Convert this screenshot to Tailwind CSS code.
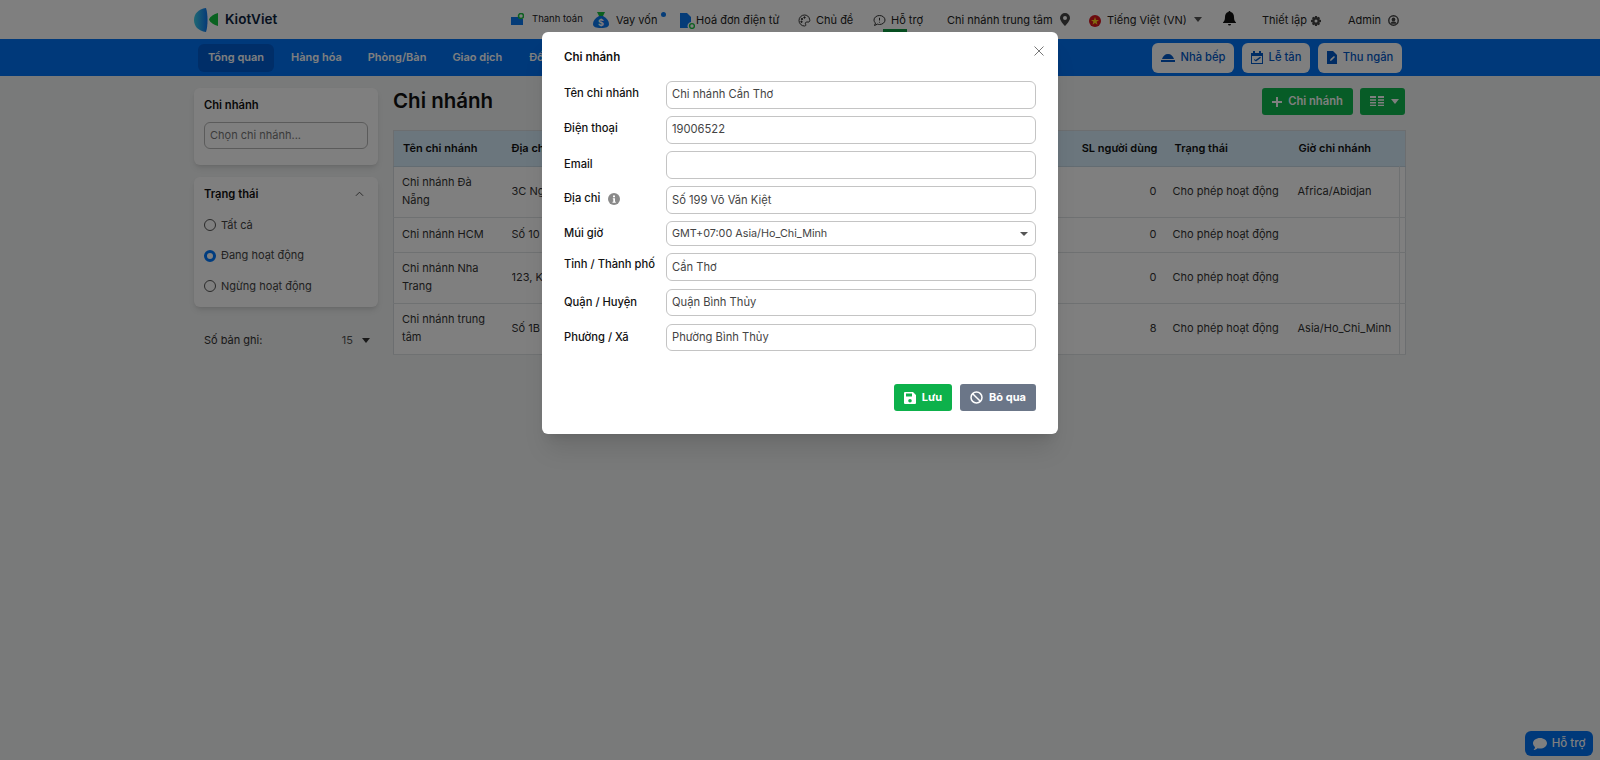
<!DOCTYPE html>
<html lang="vi">
<head>
<meta charset="utf-8">
<title>Chi nhánh</title>
<script src="https://cdn.jsdelivr.net/npm/@tailwindcss/browser@4"></script>
</head>
<body class="relative h-[760px] w-[1600px] overflow-hidden bg-[#f2f4f4] font-['Inter','Noto_Sans',sans-serif] text-[11px] text-[#1f2937]">

<header class="flex h-[39px] items-center bg-white pl-[194px] pt-[2px] text-[11px] text-[#222]">
  <svg class="mb-[2px] w-[25px] h-[24px]" viewBox="0 0 25 24"><defs><linearGradient id="lg" x1="0" x2="1"><stop offset="0" stop-color="#3fd0e8"/><stop offset="1" stop-color="#0a74f0"/></linearGradient></defs><path d="M12 0C4 1 0 6 0 12s4 11 12 12c1-3 1.500-7 1.500-12S13 3 12 0z" fill="url(#lg)"/><path d="M24 5v13c-4-1-8-3.500-9-6.500 1-3 5-5.500 9-6.500z" fill="#12c440"/></svg>
  <span class="mb-[2px] ml-[6px] w-[52px] text-[13.5px] font-semibold text-[#0c2340]">KiotViet</span>
  <svg class="mb-[2px] ml-[234px] w-[13px] h-[13px]" viewBox="0 0 13 13"><path d="M0 4h8v2h4v6H0z" fill="#0a78f0"/><circle cx="10" cy="3" r="2.5" fill="none" stroke="#18c040" stroke-width="1.5"/></svg>
  <span class="mb-[2px] ml-[8px] w-[49px] text-[9.5px] whitespace-nowrap">Thanh toán</span>
  <svg class="mb-[2px] ml-[11px] w-[18px] h-[18px]" viewBox="0 0 18 18"><path d="M5 1h8l-2 4H7z" fill="#18c040"/><path d="M7 5h4c4 2 6 5 6 8 0 3-3 4-8 4s-8-1-8-4c0-3 2-6 6-8z" fill="#0a78f0"/><text x="9" y="15" font-size="9" font-weight="700" text-anchor="middle" fill="#fff">$</text></svg>
  <span class="ml-[6px] w-[42px] whitespace-nowrap">Vay vốn</span>
  <span class="mb-[13px] ml-[3px] h-[5px] w-[5px] rounded-full bg-[#0a78f0]"></span>
  <svg class="ml-[14px] w-[15px] h-[16px]" viewBox="0 0 15 16"><path d="M0 0h7l4 4v5a4 4 0 0 0-3 6H0z" fill="#0a78f0"/><circle cx="12" cy="13" r="2.4" fill="none" stroke="#18c040" stroke-width="1.4"/></svg>
  <span class="ml-[1px] w-[84px] whitespace-nowrap">Hoá đơn điện tử</span>
  <svg class="ml-[18px] w-[13px] h-[13px]" viewBox="0 0 13 13" fill="none" stroke="#333" stroke-width="1"><path d="M6.500 1a5.500 5.500 0 1 0 0 11c1.500 0 1.500-1 1-2s0-2 1.500-2h2c1-.5 1-2 .5-3C11 2.500 9 1 6.500 1z"/><circle cx="4" cy="5" r=".7" fill="#333"/><circle cx="6.500" cy="3.500" r=".7" fill="#333"/><circle cx="3.500" cy="7.800" r=".7" fill="#333"/></svg>
  <span class="ml-[5px] w-[37px] whitespace-nowrap">Chủ đề</span>
  <svg class="ml-[20px] w-[13px] h-[13px]" viewBox="0 0 13 13" fill="none" stroke="#333" stroke-width="1"><path d="M6.500 1.500c3 0 5.500 2 5.500 4.500s-2.500 4.500-5.500 4.500c-1 0-1.500-.2-2-.4L1.500 11.500l1-2.500C1.500 8.200 1 7.100 1 6c0-2.500 2.500-4.500 5.500-4.500z"/><path d="M6.500 3.800v2.700M6.500 7.800v.8"/></svg>
  <span class="relative ml-[5px] w-[33px] whitespace-nowrap">Hỗ trợ<span class="absolute left-[-8px] top-[17px] h-[4px] w-[24px] bg-[#0c9a40]"></span></span>
  <span class="ml-[23px] w-[105px] whitespace-nowrap">Chi nhánh trung tâm</span>
  <svg class="mb-[3px] ml-[8px] w-[10px] h-[13px]" viewBox="0 0 10 13"><path fill-rule="evenodd" d="M5 0a5 5 0 0 1 5 5c0 2.500-3 6-5 8-2-2-5-5.500-5-8a5 5 0 0 1 5-5zm0 3a2 2 0 1 0 0 4 2 2 0 0 0 0-4z" fill="#444"/></svg>
  <svg class="ml-[19px] w-[12px] h-[12px]" viewBox="0 0 12 12"><circle cx="6" cy="6" r="6" fill="#d8141c"/><path d="M6 2l1 2.900h3L7.600 6.700l.9 3L6 8 3.500 9.700l.9-3L2 4.900h3z" fill="#ffd21e"/></svg>
  <span class="ml-[6px] w-[79px] whitespace-nowrap">Tiếng Việt (VN)</span>
  <span class="mb-[2px] ml-[8px] h-0 w-0 border-x-[4px] border-t-[5px] border-x-transparent border-t-[#555]"></span>
  <svg class="mb-[5px] ml-[21px] w-[13px] h-[15px]" viewBox="0 0 13 15"><path d="M6.500 0c.7 0 1 .5 1 1.100C9.800 1.500 11 3.500 11 6c0 3 .8 4.300 2 5.500V12H0v-.5C1.200 10.300 2 9 2 6c0-2.500 1.200-4.500 3.500-4.900C5.500.5 5.800 0 6.500 0zM5 13h3a1.500 1.500 0 0 1-3 0z" fill="#111"/></svg>
  <span class="ml-[26px] w-[44px] whitespace-nowrap">Thiết lập</span>
  <svg class="ml-[5px] w-[10px] h-[10px]" viewBox="0 0 10 10"><path fill-rule="evenodd" d="M4 0h2l.3 1.400 1.300-.7 1.400 1.400-.7 1.300L10 4v2l-1.700.6.700 1.300L7.600 9.300l-1.300-.7L6 10H4l-.3-1.400-1.300.7L1 7.900l.7-1.300L0 6V4l1.700-.6L1 2.100 2.400.7l1.300.7zM5 3.500a1.500 1.500 0 1 0 0 3 1.500 1.500 0 0 0 0-3z" fill="#444"/></svg>
  <span class="mb-[1px] ml-[27px] w-[33px] whitespace-nowrap">Admin</span>
  <svg class="mb-[1px] ml-[7px] w-[11px] h-[11px]" viewBox="0 0 10 10"><circle cx="5" cy="5" r="4.300" fill="none" stroke="#444" stroke-width="1.300"/><circle cx="5" cy="4" r="1.700" fill="#444"/><path d="M2 8c.5-1.500 1.700-2 3-2s2.500.5 3 2z" fill="#444"/></svg>
</header>

<nav class="flex h-[37px] items-center bg-[#0072f4] pl-[198px] pr-[198px] text-[11px] font-semibold text-white">
  <span class="flex h-[28px] w-[76px] items-center justify-center rounded-md bg-[#005cd0]">Tổng quan</span>
  <span class="ml-[17px]">Hàng hóa</span>
  <span class="ml-[26px]">Phòng/Bàn</span>
  <span class="ml-[26px]">Giao dịch</span>
  <span class="ml-[27px] w-[13px] overflow-hidden whitespace-nowrap">Đối tác</span>
  <div class="ml-auto flex gap-[8px] text-[11.200px] font-medium text-[#0058c8]">
    <span class="flex h-[30px] w-[82px] items-center justify-center gap-[6px] rounded-md bg-white"><svg class="w-[14px] h-[9px]" viewBox="0 0 14 9"><path d="M1 6c1-3 3-5 6-5s5 2 6 5zM0 7h14v2H0z" fill="#0058c8"/></svg>Nhà bếp</span>
    <span class="flex h-[30px] w-[68px] items-center justify-center gap-[6px] rounded-md bg-white"><svg class="w-[12px] h-[13px]" viewBox="0 0 12 13"><path fill-rule="evenodd" d="M2 0h2v2h4V0h2v2h2v11H0V2h2zm-1 5v7h10V5zm2.500 3l1 1L9 5.800l1 1L5 10.500 3 9z" fill="#0058c8"/></svg>Lễ tân</span>
    <span class="flex h-[30px] w-[84px] items-center justify-center gap-[6px] rounded-md bg-white"><svg class="w-[10px] h-[13px]" viewBox="0 0 10 13"><path fill-rule="evenodd" d="M0 0h6l4 4v9H0zm3 10l.5-2L7 5l1 1-3.500 3.500z" fill="#0058c8"/></svg>Thu ngân</span>
  </div>
</nav>

<main class="flex items-start pl-[194px] pt-[12px]">
  <aside class="w-[184px]">
    <section class="h-[77px] rounded-md bg-white px-[10px] pt-[9px] shadow-md">
      <div class="text-[11.200px] font-semibold text-[#111]">Chi nhánh</div>
      <div class="mt-[8px] flex h-[27px] items-center rounded-md border border-[#b6b6b6] px-[5px] text-[#777]">Chọn chi nhánh...</div>
    </section>
    <section class="mt-[12px] h-[130px] rounded-md bg-white px-[10px] pt-[9px] shadow-md">
      <div class="flex items-center justify-between text-[11.200px] font-semibold text-[#111]">Trạng thái
        <svg class="mr-[4px] w-[9px] h-[6px]" viewBox="0 0 10 6" fill="none" stroke="#444" stroke-width="1"><path d="M1 5l4-4 4 4"/></svg></div>
      <div class="mt-[14px] flex items-center gap-[5px] text-[#444]"><span class="h-[12px] w-[12px] rounded-full border border-[#555]"></span>Tất cả</div>
      <div class="mt-[14px] flex items-center gap-[5px] text-[#444]"><span class="h-[12px] w-[12px] rounded-full border-[3.500px] border-[#0078ff] bg-white"></span>Đang hoạt động</div>
      <div class="mt-[14px] flex items-center gap-[5px] text-[#444]"><span class="h-[12px] w-[12px] rounded-full border border-[#555]"></span>Ngừng hoạt động</div>
    </section>
    <div class="mt-[25px] flex items-center pl-[10px] pr-[8px] text-[#333]">Số bản ghi:
      <span class="ml-auto text-[#555]">15</span>
      <span class="ml-[9px] h-0 w-0 border-x-[4px] border-t-[5px] border-x-transparent border-t-[#333]"></span>
    </div>
  </aside>

  <div class="ml-[15px] w-[1013px]">
    <div class="flex h-[29px] items-start justify-between pr-[1px]">
      <h1 class="text-[20.500px] font-semibold leading-[26px] text-[#111]">Chi nhánh</h1>
      <div class="flex gap-[7px] text-white">
        <span class="flex h-[27px] w-[91px] items-center justify-center gap-[6px] rounded-[3px] bg-[#0fb84e] text-[11.200px] font-semibold"><svg class="w-[10px] h-[10px]" viewBox="0 0 10 10"><path d="M4 0h2v4h4v2H6v4H4V6H0V4h4z" fill="#fff"/></svg>Chi nhánh</span>
        <span class="flex h-[27px] w-[45px] items-center justify-center gap-[7px] rounded-[3px] bg-[#0fb84e] pl-[3px]"><svg class="w-[14px] h-[12px]" viewBox="0 0 14 12" fill="#fff"><path d="M0 0h6v2H0zM8 0h6v2H8zM0 3.300h6v1.400H0zM8 3.300h6v1.400H8zM0 6h6v1.400H0zM8 6h6v1.400H8zM0 8.700h6v1.400H0zM8 8.700h6v1.400H8z"/></svg><span class="h-0 w-0 border-x-[4px] border-t-[5px] border-x-transparent border-t-white"></span></span>
      </div>
    </div>
    <table class="mt-[13px] w-full table-fixed border-collapse border border-[#d8dde0] bg-white text-[11px] text-[#333]">
      <colgroup><col class="w-[108px]"><col class="w-[543px]"><col class="w-[116px]"><col class="w-[133px]"><col><col class="w-[6px]"></colgroup>
      <thead class="bg-[#d6ecfa] font-semibold text-[#111]">
        <tr class="h-[36px] border-b border-[#c6d8e4]">
          <th class="pl-[9px] text-left font-semibold">Tên chi nhánh</th>
          <th class="pl-[10px] text-left font-semibold">Địa chỉ</th>
          <th class="pr-[3px] text-right font-semibold">SL người dùng</th>
          <th class="pl-[14px] text-left font-semibold">Trạng thái</th>
          <th colspan="2" class="pl-[5px] text-left font-semibold">Giờ chi nhánh</th>
        </tr>
      </thead>
      <tbody class="leading-[18px] [&_td]:pb-[2px]">
        <tr class="h-[51px] border-b border-[#dfe3e5]">
          <td class="pl-[8px] pr-[12px]">Chi nhánh Đà Nẵng</td><td class="pl-[10px]"><span class="block w-[30px] overflow-hidden whitespace-nowrap">3C Ngô</span></td><td class="pr-[4px] text-right">0</td><td class="pl-[12px]">Cho phép hoạt động</td><td class="border-r border-[#dfe3e5] pl-[4px]">Africa/Abidjan</td><td></td>
        </tr>
        <tr class="h-[34.500px] border-b border-[#dfe3e5]">
          <td class="pl-[8px] pr-[12px]">Chi nhánh HCM</td><td class="pl-[10px]"><span class="block w-[30px] overflow-hidden whitespace-nowrap">Số 10</span></td><td class="pr-[4px] text-right">0</td><td class="pl-[12px]">Cho phép hoạt động</td><td class="border-r border-[#dfe3e5]"></td><td></td>
        </tr>
        <tr class="h-[51px] border-b border-[#dfe3e5]">
          <td class="pl-[8px] pr-[12px]">Chi nhánh Nha Trang</td><td class="pl-[10px]"><span class="block w-[30px] overflow-hidden whitespace-nowrap">123, K</span></td><td class="pr-[4px] text-right">0</td><td class="pl-[12px]">Cho phép hoạt động</td><td class="border-r border-[#dfe3e5]"></td><td></td>
        </tr>
        <tr class="h-[51px] border-b border-[#dfe3e5]">
          <td class="pl-[8px] pr-[12px]">Chi nhánh trung tâm</td><td class="pl-[10px]"><span class="block w-[30px] overflow-hidden whitespace-nowrap">Số 1B</span></td><td class="pr-[4px] text-right">8</td><td class="pl-[12px]">Cho phép hoạt động</td><td class="border-r border-[#dfe3e5] pl-[4px]">Asia/Ho_Chi_Minh</td><td></td>
        </tr>
      </tbody>
    </table>
  </div>
</main>

<span class="absolute left-[1525px] top-[731px] flex h-[25px] w-[68px] items-center justify-center gap-[5px] rounded-md bg-[#0072f4] text-[11.500px] font-medium text-white"><svg class="w-[14px] h-[12px]" viewBox="0 0 14 12"><path fill-rule="evenodd" d="M7 0c3.900 0 7 2.400 7 5.300s-3.100 5.300-7 5.300c-.9 0-1.700-.1-2.400-.4C3.500 11.200 2 12 .5 12c1-.9 1.500-2 1.500-3C.8 8 0 6.700 0 5.300 0 2.400 3.100 0 7 0z" fill="#fff"/></svg>Hỗ trợ</span>

<div class="absolute inset-0 bg-black/50"></div>

<div class="absolute left-[542px] top-[32px] h-[402px] w-[516px] rounded-md bg-white px-[22px] text-[#111] shadow-xl">
  <svg class="absolute right-[14px] top-[14px] w-[10px] h-[10px]" viewBox="0 0 10 10" fill="none" stroke="#777" stroke-width="1"><path d="M.5.500l9 9M9.500.500l-9 9"/></svg>
  <div class="pt-[18px] text-[11.500px] font-semibold leading-[14px]">Chi nhánh</div>
  <form class="mt-[17px] grid grid-cols-[102px_370px] items-start gap-y-[7.600px] text-[11.200px] font-medium">
    <label class="pt-[4px]">Tên chi nhánh</label>
    <div class="flex h-[27.500px] items-center rounded-md border border-[#c4c4c4] px-[5px] font-normal text-[#444]">Chi nhánh Cần Thơ</div>
    <label class="pt-[4px]">Điện thoại</label>
    <div class="flex h-[27.500px] items-center rounded-md border border-[#c4c4c4] px-[5px] font-normal text-[#444]">19006522</div>
    <label class="pt-[5px]">Email</label>
    <div class="h-[27.500px] rounded-md border border-[#c4c4c4]"></div>
    <label class="flex items-center gap-[8px] pt-[4px]">Địa chỉ
      <svg class="w-[12px] h-[12px]" viewBox="0 0 12 12"><circle cx="6" cy="6" r="6" fill="#8a8a8a"/><path d="M5 2.500h2v1.700H5zM4.800 5.200h2.200v3.500h.8v1H4.500v-1h.8V6.200h-.5z" fill="#fff"/></svg></label>
    <div class="flex h-[27.500px] items-center rounded-md border border-[#c4c4c4] px-[5px] font-normal text-[#444]">Số 199 Võ Văn Kiệt</div>
    <label class="pt-[4px]">Múi giờ</label>
    <div class="flex h-[24.500px] items-center justify-between rounded-md border border-[#c4c4c4] pl-[5px] pr-[7px] text-[10.800px] font-normal text-[#444]">GMT+07:00 Asia/Ho_Chi_Minh<span class="h-0 w-0 border-x-[4px] border-t-[4px] border-x-transparent border-t-[#555]"></span></div>
    <label class="pt-[3px] whitespace-nowrap">Tỉnh / Thành phố</label>
    <div class="flex h-[27.500px] items-center rounded-md border border-[#c4c4c4] px-[5px] font-normal text-[#444]">Cần Thơ</div>
    <label class="pt-[5px]">Quận / Huyện</label>
    <div class="flex h-[27.500px] items-center rounded-md border border-[#c4c4c4] px-[5px] font-normal text-[#444]">Quận Bình Thủy</div>
    <label class="pt-[5px]">Phường / Xã</label>
    <div class="flex h-[27.500px] items-center rounded-md border border-[#c4c4c4] px-[5px] font-normal text-[#444]">Phường Bình Thủy</div>
  </form>
  <div class="mt-[33px] flex justify-end gap-[8px] text-[11px] font-bold text-white">
    <span class="flex h-[27px] w-[58px] items-center justify-center gap-[6px] rounded-[3px] bg-[#0db14b]"><svg class="w-[12px] h-[12px]" viewBox="0 0 12 12"><path fill-rule="evenodd" d="M1 0h8l3 3v8a1 1 0 0 1-1 1H1a1 1 0 0 1-1-1V1a1 1 0 0 1 1-1zm1 1.500v3h6v-3zM6 7a1.800 1.800 0 1 0 0 3.600A1.800 1.800 0 0 0 6 7z" fill="#fff"/></svg>Lưu</span>
    <span class="flex h-[27px] w-[76px] items-center justify-center gap-[6px] rounded-[3px] bg-[#6b7688]"><svg class="w-[13px] h-[13px]" viewBox="0 0 13 13" fill="none" stroke="#fff" stroke-width="1.500"><circle cx="6.500" cy="6.500" r="5.500"/><path d="M2.700 2.700l7.600 7.600"/></svg>Bỏ qua</span>
  </div>
</div>

</body>
</html>
